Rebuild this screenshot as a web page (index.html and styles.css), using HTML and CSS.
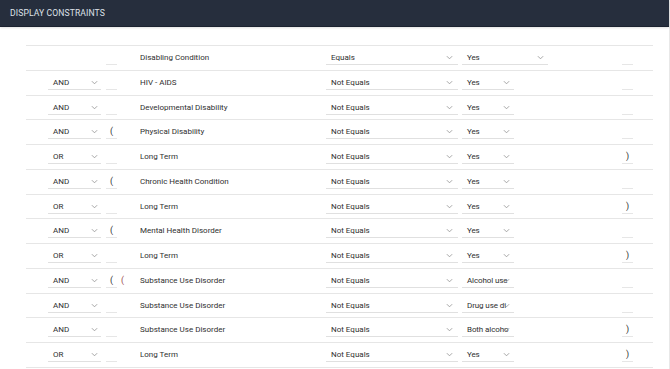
FILE: index.html
```html
<!DOCTYPE html>
<html>
<head>
<meta charset="utf-8">
<link rel="stylesheet" href="styles.css">
</head>
<body>
<div class="page">
  <header class="bar"><span class="title">DISPLAY CONSTRAINTS</span></header>
  <div class="rows">
    <div class="row">
      <div class="c-logic"></div>
      <div class="c-open"><span class="paren-box"></span></div>
      <div class="c-field">Disabling Condition</div>
      <div class="c-op"><span class="sel op"><span class="txt">Equals</span><svg class="chev" viewBox="0 0 8 5"><path d="M1 1l3 3 3-3"/></svg></span></div>
      <div class="c-val"><span class="sel val wide"><span class="txt">Yes</span><svg class="chev" viewBox="0 0 8 5"><path d="M1 1l3 3 3-3"/></svg></span></div>
      <div class="c-close"><span class="paren-box"></span></div>
    </div>
    <div class="row">
      <div class="c-logic"><span class="sel logic"><span class="txt">AND</span><svg class="chev" viewBox="0 0 8 5"><path d="M1 1l3 3 3-3"/></svg></span></div>
      <div class="c-open"><span class="paren-box"></span></div>
      <div class="c-field">HIV - AIDS</div>
      <div class="c-op"><span class="sel op"><span class="txt">Not Equals</span><svg class="chev" viewBox="0 0 8 5"><path d="M1 1l3 3 3-3"/></svg></span></div>
      <div class="c-val"><span class="sel val"><span class="txt">Yes</span><svg class="chev" viewBox="0 0 8 5"><path d="M1 1l3 3 3-3"/></svg></span></div>
      <div class="c-close"><span class="paren-box"></span></div>
    </div>
    <div class="row">
      <div class="c-logic"><span class="sel logic"><span class="txt">AND</span><svg class="chev" viewBox="0 0 8 5"><path d="M1 1l3 3 3-3"/></svg></span></div>
      <div class="c-open"><span class="paren-box"></span></div>
      <div class="c-field">Developmental Disability</div>
      <div class="c-op"><span class="sel op"><span class="txt">Not Equals</span><svg class="chev" viewBox="0 0 8 5"><path d="M1 1l3 3 3-3"/></svg></span></div>
      <div class="c-val"><span class="sel val"><span class="txt">Yes</span><svg class="chev" viewBox="0 0 8 5"><path d="M1 1l3 3 3-3"/></svg></span></div>
      <div class="c-close"><span class="paren-box"></span></div>
    </div>
    <div class="row">
      <div class="c-logic"><span class="sel logic"><span class="txt">AND</span><svg class="chev" viewBox="0 0 8 5"><path d="M1 1l3 3 3-3"/></svg></span></div>
      <div class="c-open"><span class="paren-box">(</span></div>
      <div class="c-field">Physical Disability</div>
      <div class="c-op"><span class="sel op"><span class="txt">Not Equals</span><svg class="chev" viewBox="0 0 8 5"><path d="M1 1l3 3 3-3"/></svg></span></div>
      <div class="c-val"><span class="sel val"><span class="txt">Yes</span><svg class="chev" viewBox="0 0 8 5"><path d="M1 1l3 3 3-3"/></svg></span></div>
      <div class="c-close"><span class="paren-box"></span></div>
    </div>
    <div class="row">
      <div class="c-logic"><span class="sel logic"><span class="txt">OR</span><svg class="chev" viewBox="0 0 8 5"><path d="M1 1l3 3 3-3"/></svg></span></div>
      <div class="c-open"><span class="paren-box"></span></div>
      <div class="c-field">Long Term</div>
      <div class="c-op"><span class="sel op"><span class="txt">Not Equals</span><svg class="chev" viewBox="0 0 8 5"><path d="M1 1l3 3 3-3"/></svg></span></div>
      <div class="c-val"><span class="sel val"><span class="txt">Yes</span><svg class="chev" viewBox="0 0 8 5"><path d="M1 1l3 3 3-3"/></svg></span></div>
      <div class="c-close"><span class="paren-box">)</span></div>
    </div>
    <div class="row">
      <div class="c-logic"><span class="sel logic"><span class="txt">AND</span><svg class="chev" viewBox="0 0 8 5"><path d="M1 1l3 3 3-3"/></svg></span></div>
      <div class="c-open"><span class="paren-box">(</span></div>
      <div class="c-field">Chronic Health Condition</div>
      <div class="c-op"><span class="sel op"><span class="txt">Not Equals</span><svg class="chev" viewBox="0 0 8 5"><path d="M1 1l3 3 3-3"/></svg></span></div>
      <div class="c-val"><span class="sel val"><span class="txt">Yes</span><svg class="chev" viewBox="0 0 8 5"><path d="M1 1l3 3 3-3"/></svg></span></div>
      <div class="c-close"><span class="paren-box"></span></div>
    </div>
    <div class="row">
      <div class="c-logic"><span class="sel logic"><span class="txt">OR</span><svg class="chev" viewBox="0 0 8 5"><path d="M1 1l3 3 3-3"/></svg></span></div>
      <div class="c-open"><span class="paren-box"></span></div>
      <div class="c-field">Long Term</div>
      <div class="c-op"><span class="sel op"><span class="txt">Not Equals</span><svg class="chev" viewBox="0 0 8 5"><path d="M1 1l3 3 3-3"/></svg></span></div>
      <div class="c-val"><span class="sel val"><span class="txt">Yes</span><svg class="chev" viewBox="0 0 8 5"><path d="M1 1l3 3 3-3"/></svg></span></div>
      <div class="c-close"><span class="paren-box">)</span></div>
    </div>
    <div class="row">
      <div class="c-logic"><span class="sel logic"><span class="txt">AND</span><svg class="chev" viewBox="0 0 8 5"><path d="M1 1l3 3 3-3"/></svg></span></div>
      <div class="c-open"><span class="paren-box">(</span></div>
      <div class="c-field">Mental Health Disorder</div>
      <div class="c-op"><span class="sel op"><span class="txt">Not Equals</span><svg class="chev" viewBox="0 0 8 5"><path d="M1 1l3 3 3-3"/></svg></span></div>
      <div class="c-val"><span class="sel val"><span class="txt">Yes</span><svg class="chev" viewBox="0 0 8 5"><path d="M1 1l3 3 3-3"/></svg></span></div>
      <div class="c-close"><span class="paren-box"></span></div>
    </div>
    <div class="row">
      <div class="c-logic"><span class="sel logic"><span class="txt">OR</span><svg class="chev" viewBox="0 0 8 5"><path d="M1 1l3 3 3-3"/></svg></span></div>
      <div class="c-open"><span class="paren-box"></span></div>
      <div class="c-field">Long Term</div>
      <div class="c-op"><span class="sel op"><span class="txt">Not Equals</span><svg class="chev" viewBox="0 0 8 5"><path d="M1 1l3 3 3-3"/></svg></span></div>
      <div class="c-val"><span class="sel val"><span class="txt">Yes</span><svg class="chev" viewBox="0 0 8 5"><path d="M1 1l3 3 3-3"/></svg></span></div>
      <div class="c-close"><span class="paren-box">)</span></div>
    </div>
    <div class="row">
      <div class="c-logic"><span class="sel logic"><span class="txt">AND</span><svg class="chev" viewBox="0 0 8 5"><path d="M1 1l3 3 3-3"/></svg></span></div>
      <div class="c-open"><span class="paren-box">(</span><span class="paren-extra">(</span></div>
      <div class="c-field">Substance Use Disorder</div>
      <div class="c-op"><span class="sel op"><span class="txt">Not Equals</span><svg class="chev" viewBox="0 0 8 5"><path d="M1 1l3 3 3-3"/></svg></span></div>
      <div class="c-val"><span class="sel val"><span class="txt">Alcohol use</span><svg class="chev" viewBox="0 0 8 5"><path d="M1 1l3 3 3-3"/></svg></span></div>
      <div class="c-close"><span class="paren-box"></span></div>
    </div>
    <div class="row">
      <div class="c-logic"><span class="sel logic"><span class="txt">AND</span><svg class="chev" viewBox="0 0 8 5"><path d="M1 1l3 3 3-3"/></svg></span></div>
      <div class="c-open"><span class="paren-box"></span></div>
      <div class="c-field">Substance Use Disorder</div>
      <div class="c-op"><span class="sel op"><span class="txt">Not Equals</span><svg class="chev" viewBox="0 0 8 5"><path d="M1 1l3 3 3-3"/></svg></span></div>
      <div class="c-val"><span class="sel val"><span class="txt">Drug use di</span><svg class="chev" viewBox="0 0 8 5"><path d="M1 1l3 3 3-3"/></svg></span></div>
      <div class="c-close"><span class="paren-box"></span></div>
    </div>
    <div class="row">
      <div class="c-logic"><span class="sel logic"><span class="txt">AND</span><svg class="chev" viewBox="0 0 8 5"><path d="M1 1l3 3 3-3"/></svg></span></div>
      <div class="c-open"><span class="paren-box"></span></div>
      <div class="c-field">Substance Use Disorder</div>
      <div class="c-op"><span class="sel op"><span class="txt">Not Equals</span><svg class="chev" viewBox="0 0 8 5"><path d="M1 1l3 3 3-3"/></svg></span></div>
      <div class="c-val"><span class="sel val"><span class="txt">Both alcoho</span><svg class="chev" viewBox="0 0 8 5"><path d="M1 1l3 3 3-3"/></svg></span></div>
      <div class="c-close"><span class="paren-box">)</span></div>
    </div>
    <div class="row">
      <div class="c-logic"><span class="sel logic"><span class="txt">OR</span><svg class="chev" viewBox="0 0 8 5"><path d="M1 1l3 3 3-3"/></svg></span></div>
      <div class="c-open"><span class="paren-box"></span></div>
      <div class="c-field">Long Term</div>
      <div class="c-op"><span class="sel op"><span class="txt">Not Equals</span><svg class="chev" viewBox="0 0 8 5"><path d="M1 1l3 3 3-3"/></svg></span></div>
      <div class="c-val"><span class="sel val"><span class="txt">Yes</span><svg class="chev" viewBox="0 0 8 5"><path d="M1 1l3 3 3-3"/></svg></span></div>
      <div class="c-close"><span class="paren-box">)</span></div>
    </div>
  </div>
</div>
</body>
</html>
```
FILE: styles.css
```css
* { box-sizing: border-box; }
html, body { margin: 0; padding: 0; background: #fff; }
body {
  font-family: Roboto, "Liberation Sans", Arial, sans-serif;
  color: #2f2f2f;
  font-size: 8px;
  overflow: hidden;
}
.page {
  width: 670px;
  height: 369px;
  border-right: 1px solid #e8e8e8;
}
.bar {
  height: 27px;
  background: #262e3d;
  border-bottom: 1px solid #1b2230;
  display: flex;
  align-items: center;
  padding-left: 10px;
  box-shadow: 0 1px 2px rgba(0,0,0,0.12);
}
.title {
  color: #dde1e8;
  font-size: 8.6px;
  letter-spacing: 0.1px;
}
.rows {
  margin: 18px 0 0 26px;
  width: 627px;
  border-bottom: 1px solid #e6e6e6;
}
.row {
  display: grid;
  grid-template-columns: 22px 58px 34px 186px 136px 160px 12px;
  height: 24.77px;
  border-top: 1px solid #e6e6e6;
  align-items: start;
}
.c-logic { grid-column: 2; }
.c-open { grid-column: 3; display: flex; }
.c-field { grid-column: 4; margin-top: 5px; line-height: 13px; white-space: nowrap; }
.c-op { grid-column: 5; }
.c-val { grid-column: 6; }
.c-close { grid-column: 7; }

.sel {
  display: flex;
  align-items: center;
  height: 14px;
  margin-top: 5px;
  border-bottom: 1px solid #e0e0e0;
  line-height: 13px;
}
.sel .txt {
  flex: 1 1 auto;
  min-width: 0;
  white-space: nowrap;
  padding-left: 5px;
}
.chev {
  flex: 0 0 auto;
  width: 7px;
  height: 5px;
  fill: none;
  stroke: #999;
  stroke-width: 1;
}
.logic { width: 53px; }
.logic .chev { margin-right: 3px; }
.op { width: 132px; }
.op .chev { margin-right: 5px; }
.val { width: 52px; }
.val .txt { padding-right: 0; letter-spacing: -0.1px; }
.val .chev { margin-right: 4px; }
.val.wide { width: 86px; }
.val.wide .chev { margin-right: 4px; }

.paren-box {
  display: block;
  width: 11px;
  height: 14px;
  margin-top: 5px;
  border-bottom: 1px solid #e6e6e6;
  text-align: center;
  line-height: 13px;
  font-size: 9px;
  color: #2f2f2f;
}
.paren-extra {
  display: block;
  margin: 5px 0 0 4px;
  line-height: 13px;
  font-size: 9px;
  color: #9a4a4a;
}
```
